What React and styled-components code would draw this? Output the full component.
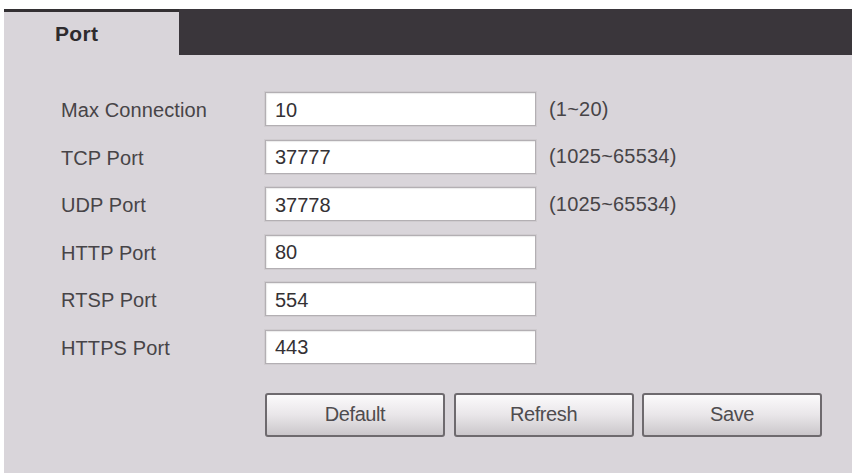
import React from 'react';
import styled, { createGlobalStyle } from 'styled-components';

const GlobalStyle = createGlobalStyle`
  body {
    margin: 0;
    background: #ffffff;
    font-family: 'Liberation Sans', Arial, sans-serif;
  }
`;

const Page = styled.div`
  padding: 9px 5px 3px 4px;
`;

const Panel = styled.div`
  background: #d9d5da;
  height: 464px;
  box-sizing: border-box;
  display: flex;
  flex-direction: column;
`;

const TabBar = styled.div`
  display: flex;
  height: 46px;
  background: #3a363b;
`;

const Tab = styled.div`
  width: 175px;
  box-sizing: border-box;
  border-top: 3px solid #333033;
  background: #d9d5da;
  padding-left: 51px;
  display: flex;
  align-items: center;
  font-size: 21px;
  font-weight: bold;
  letter-spacing: 0.3px;
  color: #2e2b2e;
`;

const Body = styled.div`
  padding: 37px 0 0 57px;
`;

const Form = styled.div`
  display: grid;
  grid-template-columns: 204px 271px auto;
  grid-auto-rows: 34px;
  row-gap: 13.5px;
  align-items: center;
`;

const Label = styled.div`
  font-size: 20px;
  color: #474447;
  padding-top: 3px;
  letter-spacing: 0.1px;
`;

const Input = styled.input`
  height: 34px;
  width: 271px;
  box-sizing: border-box;
  border: 1px solid #b3afb3;
  box-shadow: inset 1px 1px 1px rgba(0, 0, 0, 0.08), 0 0 0 1px #cfcbcf;
  background: #ffffff;
  padding: 2px 9px 0;
  font-family: 'Liberation Sans', Arial, sans-serif;
  font-size: 20px;
  color: #343134;
  outline: none;
`;

const Hint = styled.div`
  font-size: 20px;
  color: #474447;
  padding-left: 13px;
  letter-spacing: 0.2px;
`;

const Actions = styled.div`
  display: flex;
  gap: 8.5px;
  margin: 29px 0 0 204px;
`;

const Button = styled.button`
  width: 180px;
  height: 44px;
  border: 2px solid #6e6a6e;
  border-radius: 3px;
  background: linear-gradient(to bottom, #fbfafb 0%, #e9e6e9 50%, #cbc7cb 100%);
  font-family: 'Liberation Sans', Arial, sans-serif;
  font-size: 20px;
  letter-spacing: -0.4px;
  color: #4f4c4f;
  padding: 0;
  cursor: pointer;
`;

const fields = [
  { label: 'Max Connection', value: '10', hint: '(1~20)' },
  { label: 'TCP Port', value: '37777', hint: '(1025~65534)' },
  { label: 'UDP Port', value: '37778', hint: '(1025~65534)' },
  { label: 'HTTP Port', value: '80' },
  { label: 'RTSP Port', value: '554' },
  { label: 'HTTPS Port', value: '443' },
];

export default function App() {
  return (
    <>
      <GlobalStyle />
      <Page>
        <Panel>
          <TabBar>
            <Tab>Port</Tab>
          </TabBar>
          <Body>
            <Form>
              {fields.map((f) => (
                <React.Fragment key={f.label}>
                  <Label>{f.label}</Label>
                  <Input defaultValue={f.value} />
                  <Hint>{f.hint}</Hint>
                </React.Fragment>
              ))}
            </Form>
            <Actions>
              <Button>Default</Button>
              <Button>Refresh</Button>
              <Button>Save</Button>
            </Actions>
          </Body>
        </Panel>
      </Page>
    </>
  );
}
